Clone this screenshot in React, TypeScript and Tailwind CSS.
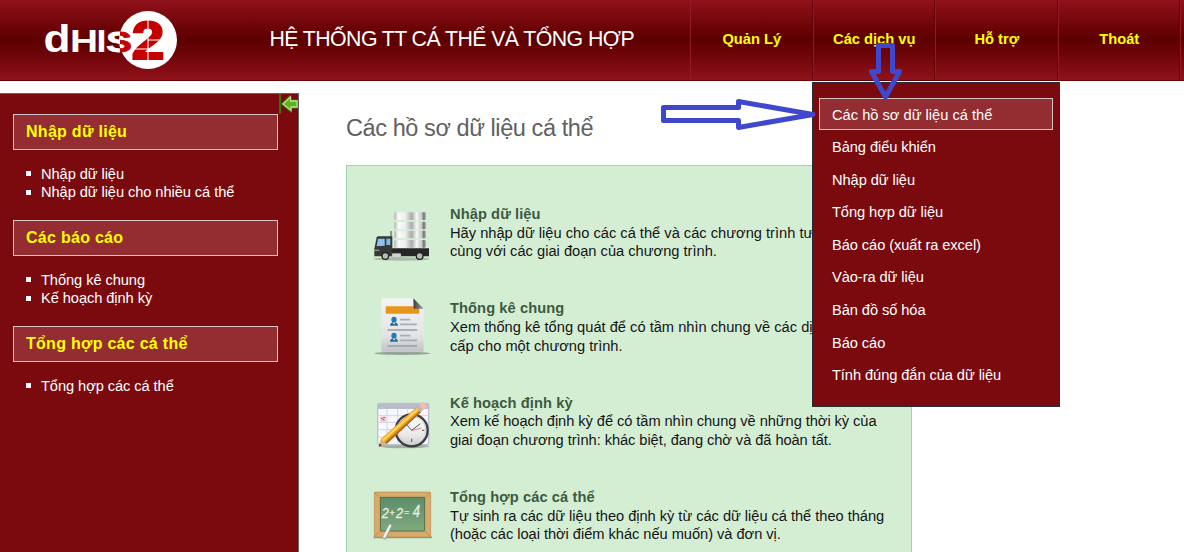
import React from "react";

const topMenu = ["Quản Lý", "Các dịch vụ", "Hỗ trợ", "Thoát"];

const serviceMenu = [
  "Các hồ sơ dữ liệu cá thể",
  "Bảng điểu khiển",
  "Nhập dữ liệu",
  "Tổng hợp dữ liệu",
  "Báo cáo (xuất ra excel)",
  "Vào-ra dữ liệu",
  "Bản đồ số hóa",
  "Báo cáo",
  "Tính đúng đắn của dữ liệu",
];

const sections = [
  { title: "Nhập dữ liệu", items: ["Nhập dữ liệu", "Nhập dữ liệu cho nhiều cá thể"] },
  { title: "Các báo cáo", items: ["Thống kê chung", "Kế hoạch định kỳ"] },
  { title: "Tổng hợp các cá thể", items: ["Tổng hợp các cá thể"] },
];

function Logo() {
  return (
    <svg className="block h-[80px] w-[240px] shrink-0" viewBox="0 0 240 80">
      <defs>
        <linearGradient id="split" gradientUnits="userSpaceOnUse" x1="119.5" x2="120.5" y1="0" y2="0">
          <stop offset="0" stopColor="#fff" />
          <stop offset="1" stopColor="#c40000" />
        </linearGradient>
      </defs>
      <circle cx="148" cy="40" r="29" fill="#fff" />
      <g fontFamily="Liberation Sans, sans-serif" fontWeight="bold">
        <text x="43.5" y="51.5" fontSize="38" fill="#fff" textLength="27" lengthAdjust="spacingAndGlyphs">d</text>
        <text x="70" y="51.5" fontSize="31" fill="#fff" textLength="28" lengthAdjust="spacingAndGlyphs">H</text>
        <text x="96.5" y="51.5" fontSize="31" fill="#fff" textLength="10" lengthAdjust="spacingAndGlyphs">I</text>
        <text x="106" y="51.5" fontSize="30" fill="url(#split)" stroke="url(#split)" strokeWidth="0.8" textLength="26" lengthAdjust="spacingAndGlyphs">S</text>
        <text x="131.5" y="59" fontSize="54" fill="#c40000" stroke="#c40000" strokeWidth="2" textLength="33" lengthAdjust="spacingAndGlyphs">2</text>
      </g>
      <path d="M148 19V60M148 40H164M132 49H164" stroke="#fff" strokeWidth="1.1" />
    </svg>
  );
}

function TruckIcon() {
  return (
    <svg className="block h-[80px] w-[90px] shrink-0" viewBox="0 0 270 240">
      <defs>
        <linearGradient id="drum">
          <stop offset="0" stopColor="#b0b0b2" />
          <stop offset=".12" stopColor="#fafafa" />
          <stop offset=".35" stopColor="#eeeeef" />
          <stop offset=".55" stopColor="#aaaaac" />
          <stop offset=".7" stopColor="#f5f5f5" />
          <stop offset=".86" stopColor="#c9c9cb" />
          <stop offset=".93" stopColor="#707074" />
          <stop offset="1" stopColor="#bcbcbc" />
        </linearGradient>
      </defs>
      <ellipse cx="125" cy="192" rx="85" ry="5" fill="#a6bea6" />
      {[52, 80, 107, 135].map((y) => (
        <rect key={y} x="103" y={y} width="95" height="23" rx="4" fill="url(#drum)" />
      ))}
      <path d="M95 160H207V184H95Z" fill="#242725" />
      <path d="M90 108H96V180H90Z" fill="#8f9991" />
      <path d="M50 127Q51 124 56 124H97V184H43V161Z" fill="#343936" />
      <path d="M54 131H74V152L50 154Z" fill="#8fc0ee" />
      <path d="M79 131H91V150H79Z" fill="#86b6e6" />
      <path d="M43 164H58V168H43Z" fill="#91958f" />
      <rect x="96" y="175" width="27" height="13" rx="3" fill="#d4d4d4" stroke="#777" />
      <circle cx="76" cy="183" r="12" fill="#242424" />
      <circle cx="76" cy="183" r="8" fill="#b9b9b9" />
      <circle cx="179" cy="183" r="12" fill="#242424" />
      <circle cx="179" cy="183" r="8" fill="#b9b9b9" />
    </svg>
  );
}

function ReportIcon() {
  return (
    <svg className="block h-[80px] w-[90px] shrink-0" viewBox="0 13 270 240">
      <defs>
        <linearGradient id="sheet" x2="0" y2="1">
          <stop stopColor="#f4f4f5" />
          <stop offset=".7" stopColor="#e4e4e7" />
          <stop offset="1" stopColor="#c2c2c4" />
        </linearGradient>
        <linearGradient id="fold">
          <stop stopColor="#3e3e3e" />
          <stop offset="1" stopColor="#a0a0a0" />
        </linearGradient>
      </defs>
      <ellipse cx="127" cy="206" rx="84" ry="5" fill="#94a495" />
      <path d="M67 41H160L191 72V201H64V44Z" fill="url(#sheet)" />
      <rect x="77" y="65" width="101" height="22" rx="2" fill="#e8951c" />
      <path d="M160 41L191 72H161Z" fill="url(#fold)" />
      {[98, 146].map((y) => (
        <g key={y}>
          <ellipse cx="102" cy={y + 7} rx="8" ry="9" fill="#237cac" />
          <path d={`M90 ${y + 25}Q91 ${y + 14} 102 ${y + 16}Q113 ${y + 14} 114 ${y + 25}Z`} fill="#20689b" />
          <path d={`M99 ${y + 16}H106L102 ${y + 22}Z`} fill="#f5f5f5" />
          <path d={`M122 ${y + 7}H149M122 ${y + 21}H169`} stroke="#a3b1b5" strokeWidth="5" strokeLinecap="round" />
          <path d={`M84 ${y + 38}H170`} stroke="#8fa1ab" strokeWidth="4" strokeLinecap="round" />
        </g>
      ))}
    </svg>
  );
}

function ScheduleIcon() {
  return (
    <svg className="block h-[80px] w-[90px] shrink-0" viewBox="0 -4 270 240">
      <defs>
        <linearGradient id="face" x2="0" y2="1">
          <stop stopColor="#fff" />
          <stop offset=".65" stopColor="#e9e9e9" />
          <stop offset="1" stopColor="#cacaca" />
        </linearGradient>
      </defs>
      <ellipse cx="132" cy="183" rx="76" ry="6" fill="#9eb1a0" />
      <rect x="53" y="54" width="153" height="124" rx="5" fill="#f7f7ff" stroke="#bfc1d2" strokeWidth="4" />
      <path d="M53 55H206V71H53Z" fill="#b9bccb" />
      <path d="M81 70V176M113 70V176M143 70V176M174 70V176M55 91H204M55 111H204M55 133H204M55 155H204" stroke="#d1d3e0" strokeWidth="3" />
      <rect x="61" y="94" width="16" height="15" fill="#f9c5ca" />
      <path d="M63 98L73 105M69 97H76" stroke="#d84a52" strokeWidth="3" />
      <circle cx="155" cy="135" r="48" fill="url(#face)" stroke="#3c3d43" strokeWidth="7" />
      <circle cx="155" cy="135" r="42" fill="none" stroke="#d0d0d0" strokeWidth="3" />
      <path d="M155 135L138 116M155 135L181 115M155 160V170M117 135H124M186 135H193" stroke="#53565b" strokeWidth="3" />
      <path d="M154 136L184 128" stroke="#df5050" strokeWidth="2" />
      <path d="M56 183L63 161L169 66L183 80L80 175Z" fill="#eda116" />
      <path d="M65 163L170 69L175 75L69 169Z" fill="#ffd064" />
      <path d="M76 171L180 77L183 81L80 176Z" fill="#ad681d" />
      <path d="M56 183L63 161L80 175Z" fill="#d8b17c" />
      <path d="M56 184L59 175L66 179Z" fill="#333" />
      <path d="M169 66L177 59L190 74L182 81Z" fill="#b9babe" />
      <path d="M177 59L188 51Q192 50 199 58Q203 63 199 67L190 74Z" fill="#f3bdb2" />
    </svg>
  );
}

function BoardIcon() {
  return (
    <svg className="block h-[80px] w-[90px] shrink-0" viewBox="0 9 270 240">
      <defs>
        <linearGradient id="board" x2="0" y2="1">
          <stop stopColor="#5c8d69" />
          <stop offset="1" stopColor="#80a97e" />
        </linearGradient>
      </defs>
      <path d="M41 184H215V190H41Z" fill="#839c7f" />
      <rect x="43" y="51" width="169" height="135" rx="3" fill="#d9ab6b" stroke="#bb8950" strokeWidth="2" />
      <path d="M44 53L61 68M210 53L194 68M44 184L61 168M210 184L194 168" stroke="#a97b46" strokeWidth="2" />
      <rect x="61" y="67" width="133" height="101" rx="2" fill="url(#board)" stroke="#536e4c" strokeWidth="3" />
      <g fontFamily="Liberation Sans, sans-serif" fontStyle="italic" fill="#e2eee3" stroke="#e2eee3" strokeWidth="1">
        <text x="65" y="130" fontSize="45" textLength="21" lengthAdjust="spacingAndGlyphs">2</text>
        <text x="88" y="122" fontSize="28">+</text>
        <text x="108" y="128" fontSize="45" textLength="21" lengthAdjust="spacingAndGlyphs">2</text>
        <text x="132" y="121" fontSize="26">=</text>
        <text x="158" y="126" fontSize="47" textLength="22" lengthAdjust="spacingAndGlyphs">4</text>
      </g>
      <path d="M91 153L74 188" stroke="#9aa293" strokeWidth="10" strokeLinecap="round" />
      <path d="M90 152L73 186" stroke="#f5f5f5" strokeWidth="7" strokeLinecap="round" />
    </svg>
  );
}

const entries = [
  {
    icon: <TruckIcon />,
    title: "Nhập dữ liệu",
    spacing: "first:tracking-normal tracking-normal",
    lines: ["Hãy nhập dữ liệu cho các cá thể và các chương trình tương ứng", "cùng với các giai đoạn của chương trình."],
  },
  {
    icon: <ReportIcon />,
    title: "Thống kê chung",
    spacing: "tracking-normal",
    lines: ["Xem thống kê tổng quát để có tầm nhìn chung về các dịch vụ cung", "cấp cho một chương trình."],
  },
  {
    icon: <ScheduleIcon />,
    title: "Kế hoạch định kỳ",
    spacing: "tracking-[-0.07px]",
    lines: ["Xem kế hoạch định kỳ để có tầm nhìn chung về những thời kỳ của", "giai đoạn chương trình: khác biệt, đang chờ và đã hoàn tất."],
  },
  {
    icon: <BoardIcon />,
    title: "Tổng hợp các cá thể",
    spacing: "tracking-[-0.04px]",
    lines: ["Tự sinh ra các dữ liệu theo định kỳ từ các dữ liệu cá thể theo tháng", "(hoặc các loại thời điểm khác nếu muốn) và đơn vị."],
  },
];

function Sidebar() {
  return (
    <aside className="flex h-[459px] w-[299px] shrink-0 items-start border-t border-r border-[#666] bg-[#7b0a0e]">
      <div className="w-[279px] shrink-0 pt-5 pl-[13px]">
        {sections.map((section) => (
          <section key={section.title} className="pb-[18.4px]">
            <h2 className="h-9 w-[265px] border border-[#d6c5c7] bg-[#942d32] pl-3 text-[16px] leading-[34px] font-bold tracking-[0.28px] text-[#ffff00]">
              {section.title}
            </h2>
            <ul className="pt-[14.6px]">
              {section.items.map((item) => (
                <li key={item} className="flex h-[18.5px] items-center gap-[10px] pl-[13px] text-[14.67px] leading-[18px] tracking-[-0.08px] text-white">
                  <span className="size-[5px] shrink-0 bg-white" />
                  <span>{item}</span>
                </li>
              ))}
            </ul>
          </section>
        ))}
      </div>
      <svg className="block h-5 w-[19px] shrink-0" viewBox="0 0 19 20">
        <path d="M1 0V20" stroke="#347600" strokeWidth="2" />
        <path d="M2.5 10L11 1.5V6H18.5V14H12.5V18.5Z" fill="#5cb61b" stroke="#347b0d" strokeWidth="1" />
        <path d="M4 10L11.5 3V7H18V13H12V16.5Z" fill="none" stroke="#b7df98" strokeWidth="1.3" />
      </svg>
    </aside>
  );
}

function ServicesDropdown() {
  return (
    <nav className="absolute top-[82px] left-[812px] z-10 h-[325px] w-[248px] border border-[#292d3a] bg-[#7b0a0e] px-[6px] pt-[15px] text-[14.67px] tracking-[-0.08px] whitespace-nowrap text-white">
      {serviceMenu.map((label, i) => (
        <div
          key={label}
          className={
            i === 0
              ? "h-[32px] w-[234px] border border-[#d6c5c7] bg-[#942d32] pl-3 leading-[33px] tracking-normal"
              : "h-[32.6px] pl-[13px] leading-[35px]"
          }
        >
          {label}
        </div>
      ))}
    </nav>
  );
}

export default function App() {
  return (
    <div className="relative h-[552px] w-[1184px] overflow-hidden bg-white font-['Liberation_Sans',Arial,sans-serif]">
      <header className="flex h-[81px] border-b border-[#650008] bg-linear-to-b from-[#90121a] via-[#5c0000] to-[#90121a]">
        <Logo />
        <h1 className="w-[450px] shrink-0 pl-[29.5px] text-[21.33px] leading-[78px] tracking-[-0.6px] whitespace-nowrap text-white">
          HỆ THỐNG TT CÁ THỂ VÀ TỔNG HỢP
        </h1>
        <nav className="flex">
          {topMenu.map((label) => (
            <div key={label} className="h-20 w-[122.5px] shrink-0 border-r border-l border-r-[#62000a] border-l-[#921b23] pl-px text-center text-[14.67px] leading-[78px] font-bold text-[#ffff00]">
              {label}
            </div>
          ))}
          <div className="w-1 border-l border-[#921b23]" />
        </nav>
      </header>
      <div className="flex pt-3">
        <Sidebar />
        <main className="pl-[47px]">
          <h2 className="h-[72px] pt-[18px] text-[23.5px] leading-[34px] tracking-[-0.42px] text-[#606060]">Các hồ sơ dữ liệu cá thể</h2>
          <div className="h-[400px] w-[566px] border border-[#a4d1a6] bg-[#d4eed4] pt-[29px] pl-[13px]">
            {entries.map((entry) => (
              <article key={entry.title} className="flex h-[94.33px]">
                {entry.icon}
                <div className="pt-[10px] text-[14.67px] leading-[18.6px] whitespace-nowrap text-[#141414]">
                  <h3 className="font-bold tracking-[0.08px] text-[#3d5a40]">{entry.title}</h3>
                  {entry.lines.map((line) => (
                    <p key={line} className={entry.spacing}>{line}</p>
                  ))}
                </div>
              </article>
            ))}
          </div>
        </main>
      </div>
      <ServicesDropdown />
      <svg className="pointer-events-none absolute inset-0 z-20" width="1184" height="552" viewBox="0 0 1184 552">
        <g fill="none" stroke="#3f48cc" strokeWidth="5" strokeLinejoin="round">
          <path d="M663.5 107.5H738.5V101.5L813 114.5L738.5 127.5V120.5H663.5Z" />
          <path d="M878.5 45.5H892.5V71.5H899.5L885.5 97L871.5 71.5H878.5Z" />
        </g>
      </svg>
    </div>
  );
}
